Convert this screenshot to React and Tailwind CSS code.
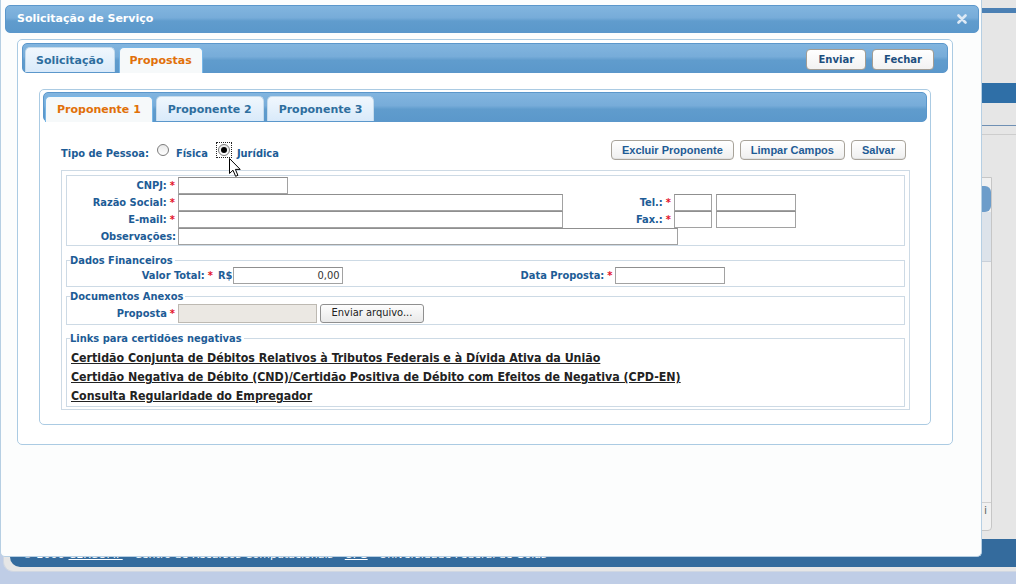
import React from 'react';

const verd = "font-['DejaVu_Sans',Verdana,sans-serif]";
const cond = "font-['DejaVu_Sans_Condensed','DejaVu_Sans',sans-serif]";
const arial = "font-['Liberation_Sans',Arial,sans-serif]";
const lbl = `${cond} font-bold text-[11px] text-[#1d5c96] leading-[17px]`;
const inp = 'h-[17px] border border-[#a2a2a2] border-t-[#8f8f8f] bg-white outline-none';
const headerBg =
  'bg-[linear-gradient(to_bottom,#82b5df_0%,#77acd9_45%,#609ccd_58%,#5b98cb_100%)]';

function Req() {
  return <span className="text-[#e3132b] ml-[3px]">*</span>;
}

function Legend({ children }) {
  return (
    <legend className={`${cond} font-bold text-[11px] text-[#1d5c96] leading-[13px] pr-[2px]`}>
      {children}
    </legend>
  );
}

function TabBtn({ children, active, big }) {
  return (
    <div
      className={`${verd} font-bold text-[11px] flex items-center pt-[2px] border rounded-t-[5px] ${
        big ? 'px-[11px]' : 'px-[10px]'
      } ${
        active
          ? 'h-[26px] -mb-px bg-[#f6f9fa] border-[#79b7e7] border-b-0 text-[#e17009]'
          : 'h-[25px] bg-[linear-gradient(to_bottom,#f0f7fd,#d9eafa)] border-[#c5dbec] border-b-0 text-[#2e6e9e]'
      }`}
    >
      {children}
    </div>
  );
}

function GrayBtn({ children }) {
  return (
    <button
      className={`${arial} font-bold text-[11px] text-[#1e5b95] h-[20px] px-[10px] border border-[#a8a39a] rounded-[4px] bg-[linear-gradient(to_bottom,#ffffff,#efefef)] shadow-[inset_0_-1px_0_#e2e2e2]`}
    >
      {children}
    </button>
  );
}

function Radio({ checked }) {
  return (
    <span className="w-[12px] h-[12px] rounded-full border border-[#7c7c7c] bg-[linear-gradient(to_bottom,#e9e9e9,#ffffff)] flex items-center justify-center">
      {checked && <span className="w-[6px] h-[6px] rounded-full bg-black" />}
    </span>
  );
}

function Background() {
  return (
    <div className="flex flex-col h-[572px] ml-[3px] bg-[#e6e6e6] border-l border-b border-[#d0d7e2] rounded-bl-[10px]">
      <div className="h-[8px]" />
      <div className="h-[5px] bg-[#4b80b4]" />
      <div className="h-[70px]" />
      <div className="h-[20px] bg-[#2f6fa7]" />
      <div className="h-[22px]" />
      <div className="h-px bg-[#6f90b4]" />
      <div className="h-[8px]" />
      <div className="h-px bg-[#cdcdcd]" />
      <div className="h-[42px]" />
      <div className="mr-[24px] h-[354px] border border-[#c6c6c6] bg-[#f1f1f1] flex flex-col rounded-br-[4px]">
        <div className="mt-[8px] h-[26px] bg-[#6d9dca] rounded-r-[6px]" />
        <div className="h-[50px] bg-[#dde3ea] border-b border-[#c9d0d9]" />
        <div className="flex-1" />
        <div className={`${verd} h-[28px] border-t border-[#d0d0d0] text-right pr-[4px] text-[11px] text-[#666]`}>
          i
        </div>
      </div>
      <div
        className={`${verd} mt-[8px] flex-1 bg-[#346b9d] rounded-bl-[10px] ml-[6px] text-white flex items-center pt-[5px] pl-[12px] text-[11px]`}
      >
        © 2006 <u className="mx-[4px]">CERCOMP</u> - Centro de Recursos Computacionais - <u className="mx-[4px]">UFG</u> - Universidade Federal de Goiás
      </div>
      <div className="h-[4px]" />
    </div>
  );
}

export default function App() {
  return (
    <div className="relative w-[1016px] h-[584px] overflow-hidden bg-[#bfcde6]">
      <Background />

      {/* dialog */}
      <div className="absolute left-0 top-0 w-[982px] h-[557px] bg-[#fcfdfd] border border-t-0 border-[#b6cfe3] rounded-b-[5px] pl-[4px] pr-[2px] pt-[5px] flex flex-col">
        <div
          className={`${headerBg} h-[28px] border border-[#5b97cb] rounded-[5px] flex items-center justify-between pl-[11px] pr-[11px]`}
        >
          <span className={`${verd} font-bold text-[11px] text-white`}>Solicitação de Serviço</span>
          <svg width="10" height="10" viewBox="0 0 10 10">
            <path d="M1.5 1.5 L8.5 8.5 M8.5 1.5 L1.5 8.5" stroke="#dde9f5" strokeWidth="2.6" strokeLinecap="round" />
          </svg>
        </div>

        {/* outer tabs */}
        <div className="mt-[6px] ml-[12px] w-[936px] border border-[#abcbe3] rounded-[5px] bg-white px-[4px] pt-[3px] pb-[4px]">
          <div className={`${headerBg} h-[30px] border border-[#5b97cb] rounded-[5px] flex items-end pl-[2px] pr-[13px]`}>
            <div className="flex items-end gap-[4px]">
              <TabBtn>Solicitação</TabBtn>
              <TabBtn active>Propostas</TabBtn>
            </div>
            <div className="ml-auto self-center mt-[2px] flex gap-[6px]">
              {['Enviar', 'Fechar'].map((t) => (
                <button
                  key={t}
                  className={`${verd} font-bold text-[10px] text-[#1d4f7f] h-[21px] px-[11px] border border-[#a39d93] rounded-[4px] bg-[linear-gradient(to_bottom,#ffffff,#f2f2f2)]`}
                >
                  {t}
                </button>
              ))}
            </div>
          </div>

          <div className="pt-[16px] pl-[17px] pr-[17px] pb-[15px]">
            {/* inner tabs */}
            <div className="border border-[#abcbe3] rounded-[5px] bg-white px-[3px] pt-[2px] pb-[3px]">
              <div className={`${headerBg} h-[30px] border border-[#5b97cb] rounded-[5px] flex items-end pl-px gap-[3px]`}>
                <TabBtn active big>Proponente 1</TabBtn>
                <TabBtn big>Proponente 2</TabBtn>
                <TabBtn big>Proponente 3</TabBtn>
              </div>

              <div className="pl-[18px] pr-[17px] pt-[18px] pb-[11px]">
                <div className="flex items-center h-[20px]">
                  <span className={`${lbl} pt-[6px]`}>Tipo de Pessoa:</span>
                  <span className="ml-[8px]">
                    <Radio />
                  </span>
                  <span className={`${lbl} pt-[6px] ml-[7px]`}>Física</span>
                  <span className="ml-[8px] border border-dotted border-[#222] p-px">
                    <Radio checked />
                  </span>
                  <span className={`${lbl} pt-[6px] ml-[5px]`}>Jurídica</span>
                  <div className="ml-auto mr-[4px] flex gap-[6px]">
                    <GrayBtn>Excluir Proponente</GrayBtn>
                    <GrayBtn>Limpar Campos</GrayBtn>
                    <GrayBtn>Salvar</GrayBtn>
                  </div>
                </div>

                <div className="mt-[10px] border border-[#cddae5] px-[4px] pt-[4px] pb-[2px]">
                  <fieldset className="border border-[#cddae5] pt-px">
                    <div className="flex h-[17px]">
                      <label className={`${lbl} w-[111px] text-right pr-[3px]`}>
                        CNPJ:<Req />
                      </label>
                      <input readOnly className={`${inp} w-[110px]`} />
                    </div>
                    <div className="flex h-[17px]">
                      <label className={`${lbl} w-[111px] text-right pr-[3px]`}>
                        Razão Social:<Req />
                      </label>
                      <input readOnly className={`${inp} w-[385px]`} />
                      <label className={`${lbl} w-[111px] text-right pr-[3px]`}>
                        Tel.:<Req />
                      </label>
                      <input readOnly className={`${inp} w-[38px]`} />
                      <input readOnly className={`${inp} w-[80px] ml-[4px]`} />
                    </div>
                    <div className="flex h-[17px]">
                      <label className={`${lbl} w-[111px] text-right pr-[3px]`}>
                        E-mail:<Req />
                      </label>
                      <input readOnly className={`${inp} w-[385px]`} />
                      <label className={`${lbl} w-[111px] text-right pr-[3px]`}>
                        Fax.:<Req />
                      </label>
                      <input readOnly className={`${inp} w-[38px]`} />
                      <input readOnly className={`${inp} w-[80px] ml-[4px]`} />
                    </div>
                    <div className="flex h-[17px]">
                      <label className={`${lbl} w-[111px] text-right pr-[2px]`}>Observações:</label>
                      <input readOnly className={`${inp} w-[500px]`} />
                    </div>
                  </fieldset>

                  <fieldset className="mt-[8px] border border-[#cddae5] pl-[3px] pb-[2px]">
                    <Legend>Dados Financeiros</Legend>
                    <div className="flex h-[17px]">
                      <label className={`${lbl} w-[143px] text-right`}>
                        Valor Total:<Req />
                      </label>
                      <span className={`${lbl} ml-[5px]`}>R$</span>
                      <input
                        readOnly
                        value="0,00"
                        className={`${inp} ${cond} w-[110px] text-right pr-[2px] text-[11px] text-[#333]`}
                      />
                      <label className={`${lbl} w-[272px] text-right pr-[2px]`}>
                        Data Proposta:<Req />
                      </label>
                      <input readOnly className={`${inp} w-[110px]`} />
                    </div>
                  </fieldset>

                  <fieldset className="mt-[3px] border border-[#cddae5] pl-[3px] pb-px">
                    <Legend>Documentos Anexos</Legend>
                    <div className="flex h-[19px] mt-px">
                      <label className={`${lbl} leading-[19px] w-[108px] text-right pr-[3px]`}>
                        Proposta<Req />
                      </label>
                      <div className="w-[139px] h-[19px] border border-[#bdb9b2] bg-[#ebe8e3]" />
                      <button
                        className={`${cond} ml-[3px] w-[104px] h-[19px] text-[11px] text-[#222] border border-[#8f8f8f] rounded-[3px] bg-[linear-gradient(to_bottom,#fdfdfd,#e9e9e9)]`}
                      >
                        Enviar arquivo...
                      </button>
                    </div>
                  </fieldset>

                  <fieldset className="mt-[7px] border border-[#cddae5] pl-[3px]">
                    <Legend>Links para certidões negativas</Legend>
                    <div className={`${cond} font-bold text-[12.3px] leading-[19px] text-[#222] pt-[4px] pl-px flex flex-col items-start`}>
                      <a className="underline">
                        Certidão Conjunta de Débitos Relativos à Tributos Federais e à Dívida Ativa da União
                      </a>
                      <a className="underline">
                        Certidão Negativa de Débito (CND)/Certidão Positiva de Débito com Efeitos de Negativa (CPD-EN)
                      </a>
                      <a className="underline">Consulta Regularidade do Empregador</a>
                    </div>
                  </fieldset>
                </div>
              </div>
            </div>
          </div>
        </div>
      </div>

      {/* mouse pointer */}
      <svg className="absolute left-[229px] top-[158px]" width="13" height="20" viewBox="0 0 13 20">
        <path
          d="M0.5 0.5 L0.5 15.5 L4 12.2 L6.6 18.3 L8.9 17.3 L6.4 11.4 L11.2 11.4 Z"
          fill="#fff"
          stroke="#000"
          strokeWidth="1"
          strokeLinejoin="round"
        />
      </svg>
    </div>
  );
}
